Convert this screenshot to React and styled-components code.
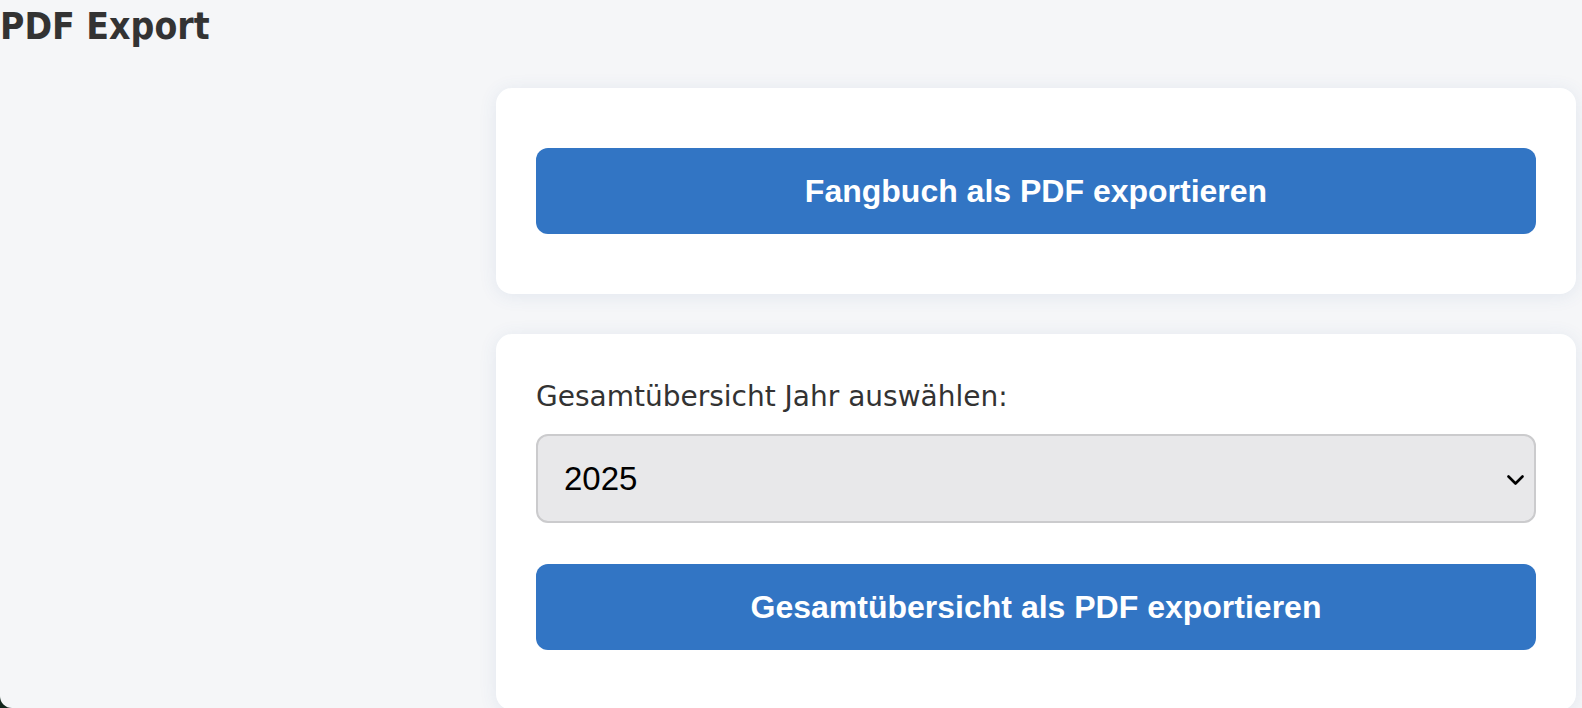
import React from "react";
import styled, { createGlobalStyle } from "styled-components";

const Global = createGlobalStyle`
  html, body {
    margin: 0;
    padding: 0;
    height: 708px;
    overflow: hidden;
    background: #13261c;
  }
  * { box-sizing: border-box; }
`;

const Page = styled.div`
  height: 708px;
  background: #f5f6f8;
  border-bottom-left-radius: 12px;
  overflow: hidden;
  display: flex;
  flex-direction: column;
`;

const Title = styled.h1`
  margin: 0;
  padding-top: 5px;
  font-family: "DejaVu Sans Condensed", "DejaVu Sans", sans-serif;
  font-stretch: condensed;
  font-weight: bold;
  font-size: 37px;
  line-height: 43px;
  color: #333333;
`;

const Layout = styled.div`
  display: grid;
  grid-template-columns: 496px 1fr;
  padding-right: 6px;
  margin-top: 40px;
`;

const Sidebar = styled.div``;

const Main = styled.main`
  display: flex;
  flex-direction: column;
  gap: 40px;
`;

const Card = styled.section`
  background: #ffffff;
  border-radius: 16px;
  box-shadow: 0 2px 18px rgba(60, 100, 160, 0.1);
  padding: ${(p) => p.$top}px 40px 60px;
  display: flex;
  flex-direction: column;
`;

const Label = styled.label`
  font-family: "DejaVu Sans", sans-serif;
  font-size: 28px;
  line-height: 33px;
  color: #333333;
  margin-bottom: 21px;
`;

const SelectWrap = styled.div`
  position: relative;
  margin-bottom: 41px;
`;

const Select = styled.select`
  appearance: none;
  -webkit-appearance: none;
  width: 100%;
  height: 89px;
  padding: 0 60px 0 26px;
  border: 2px solid #cbcbcd;
  border-radius: 12px;
  background: #e8e8ea;
  color: #000000;
  font-family: "Liberation Sans", Arial, sans-serif;
  font-size: 33px;
  outline: none;
`;

const Chevron = styled.svg`
  position: absolute;
  right: 12px;
  top: 41px;
  width: 17px;
  height: 11px;
  pointer-events: none;
`;

const Button = styled.button`
  height: 86px;
  width: 100%;
  border: none;
  border-radius: 12px;
  background: #3275c4;
  color: #ffffff;
  font-family: "Liberation Sans", Arial, sans-serif;
  font-weight: bold;
  font-size: 32px;
  cursor: pointer;
`;

export default function App() {
  return (
    <>
      <Global />
      <Page>
        <Title>PDF Export</Title>
        <Layout>
          <Sidebar />
          <Main>
            <Card $top={60}>
              <Button>Fangbuch als PDF exportieren</Button>
            </Card>
            <Card $top={46}>
              <Label htmlFor="year">Gesamtübersicht Jahr auswählen:</Label>
              <SelectWrap>
                <Select id="year" defaultValue="2025">
                  <option value="2025">2025</option>
                  <option value="2024">2024</option>
                  <option value="2023">2023</option>
                </Select>
                <Chevron viewBox="0 0 17 11" fill="none">
                  <path d="M1.5 1.5 L8.5 8.5 L15.5 1.5" stroke="#000" strokeWidth="2.6" strokeLinecap="round" strokeLinejoin="round" />
                </Chevron>
              </SelectWrap>
              <Button>Gesamtübersicht als PDF exportieren</Button>
            </Card>
          </Main>
        </Layout>
      </Page>
    </>
  );
}
